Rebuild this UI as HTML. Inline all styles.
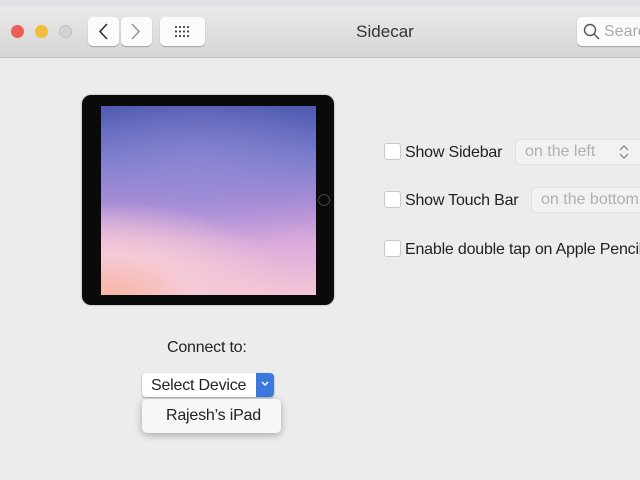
<!DOCTYPE html>
<html><head><style>
body{margin:0;width:640px;height:480px;overflow:hidden;background:#ececec;font-family:"Liberation Sans",sans-serif;position:relative}
.a{position:absolute}
.tb{left:0;top:0;width:640px;height:57px;background:linear-gradient(#e0e1e5 0,#e0e1e5 6px,#e9e9e9 7px,#d6d6d6 57px);border-bottom:1px solid #bdbdbd}
.dot{width:13px;height:13px;border-radius:50%;top:25px}
.btn{background:#fbfbfb;border-radius:5px;box-shadow:0 1px 1px rgba(0,0,0,.25);top:17px;height:29px}
.cb{width:15px;height:15px;background:#fff;border:1px solid #c9c9c9;border-radius:3px}
.lbl{font-size:16px;color:#222;letter-spacing:-0.2px}
.pop{background:#f2f2f2;border:1px solid #e0e0e0;border-radius:4px;color:#b0b0b0;font-size:16px;height:24px;line-height:24px;padding-left:9px}
</style></head><body>
<div class="a tb"></div>
<div class="a dot" style="left:11px;background:#ec5f57"></div>
<div class="a dot" style="left:35px;background:#f1bd3b"></div>
<div class="a dot" style="left:59px;background:#d3d3d3;border:1px solid #c0c0c0;width:11px;height:11px"></div>
<div class="a btn" style="left:88px;width:31px"></div>
<div class="a btn" style="left:121px;width:31px"></div>
<svg class="a" style="left:88px;top:17px" width="64" height="29"><path d="M19 7 L12 14.5 L19 22" fill="none" stroke="#333" stroke-width="1.6"/><path d="M44 7 L51 14.5 L44 22" fill="none" stroke="#999" stroke-width="1.6"/></svg>
<div class="a btn" style="left:160px;width:45px"></div>
<svg class="a" style="left:174px;top:25px" width="17" height="13"><g fill="#444"><circle cx="2" cy="2" r="1.1"/><circle cx="6" cy="2" r="1.1"/><circle cx="10" cy="2" r="1.1"/><circle cx="14" cy="2" r="1.1"/><circle cx="2" cy="6.5" r="1.1"/><circle cx="6" cy="6.5" r="1.1"/><circle cx="10" cy="6.5" r="1.1"/><circle cx="14" cy="6.5" r="1.1"/><circle cx="2" cy="11" r="1.1"/><circle cx="6" cy="11" r="1.1"/><circle cx="10" cy="11" r="1.1"/><circle cx="14" cy="11" r="1.1"/></g></svg>
<div class="a" style="left:0;width:770px;top:22px;text-align:center;font-size:17px;color:#333">Sidecar</div>
<div class="a btn" style="left:577px;width:80px"></div>
<svg class="a" style="left:583px;top:23px" width="18" height="18"><circle cx="7" cy="7" r="5.5" fill="none" stroke="#555" stroke-width="1.4"/><path d="M11 11 L16 16" stroke="#555" stroke-width="1.5"/></svg>
<div class="a" style="left:604px;top:23px;font-size:16px;color:#aaa">Search</div>

<div class="a" style="left:82px;top:95px;width:252px;height:210px;background:#0a0a0a;border-radius:9px;box-shadow:0 0 2px rgba(0,0,0,.3)"></div>
<div class="a" style="left:101px;top:106px;width:215px;height:189px;background:radial-gradient(ellipse 120% 70% at 5% 100%,#f7b6a4 0%,#f5cad6 30%,transparent 70%),radial-gradient(ellipse 80% 60% at 45% 35%,rgba(150,140,215,.6),transparent 80%),linear-gradient(#4d59b0 0%,#7a7ccc 28%,#ad8ed6 52%,#dcaadc 72%,#f3c6d6 100%)"></div>
<div class="a" style="left:318px;top:194px;width:10px;height:10px;border-radius:50%;border:1px solid #444"></div>

<div class="a cb" style="left:384px;top:143px"></div>
<div class="a lbl" style="left:405px;top:144px">Show Sidebar</div>
<div class="a pop" style="left:515px;top:139px;width:140px">on the left</div>
<svg class="a" style="left:618px;top:143px" width="12" height="18"><path d="M2 7 L6 3 L10 7 M2 11 L6 15 L10 11" fill="none" stroke="#888" stroke-width="1.3"/></svg>
<div class="a cb" style="left:384px;top:191px"></div>
<div class="a lbl" style="left:405px;top:192px">Show Touch Bar</div>
<div class="a pop" style="left:531px;top:187px;width:120px">on the bottom</div>
<div class="a cb" style="left:384px;top:240px"></div>
<div class="a lbl" style="left:405px;top:241px;white-space:nowrap">Enable double tap on Apple Pencil</div>

<div class="a lbl" style="left:167px;top:339px">Connect to:</div>
<div class="a" style="left:142px;top:373px;width:132px;height:24px;background:#fff;border-radius:4px;box-shadow:0 1px 2px rgba(0,0,0,.3)"></div>
<div class="a lbl" style="left:151px;top:377px">Select Device</div>
<div class="a" style="left:256px;top:373px;width:18px;height:24px;background:#3b78e0;border-radius:0 4px 4px 0"></div>
<svg class="a" style="left:260px;top:380px" width="10" height="8"><path d="M2 2 L5 5 L8 2" fill="none" stroke="#fff" stroke-width="1.5"/></svg>
<div class="a" style="left:142px;top:399px;width:139px;height:34px;background:#f7f7f7;border-radius:5px;box-shadow:0 2px 8px rgba(0,0,0,.3)"></div>
<div class="a lbl" style="left:166px;top:407px">Rajesh’s iPad</div>
</body></html>
